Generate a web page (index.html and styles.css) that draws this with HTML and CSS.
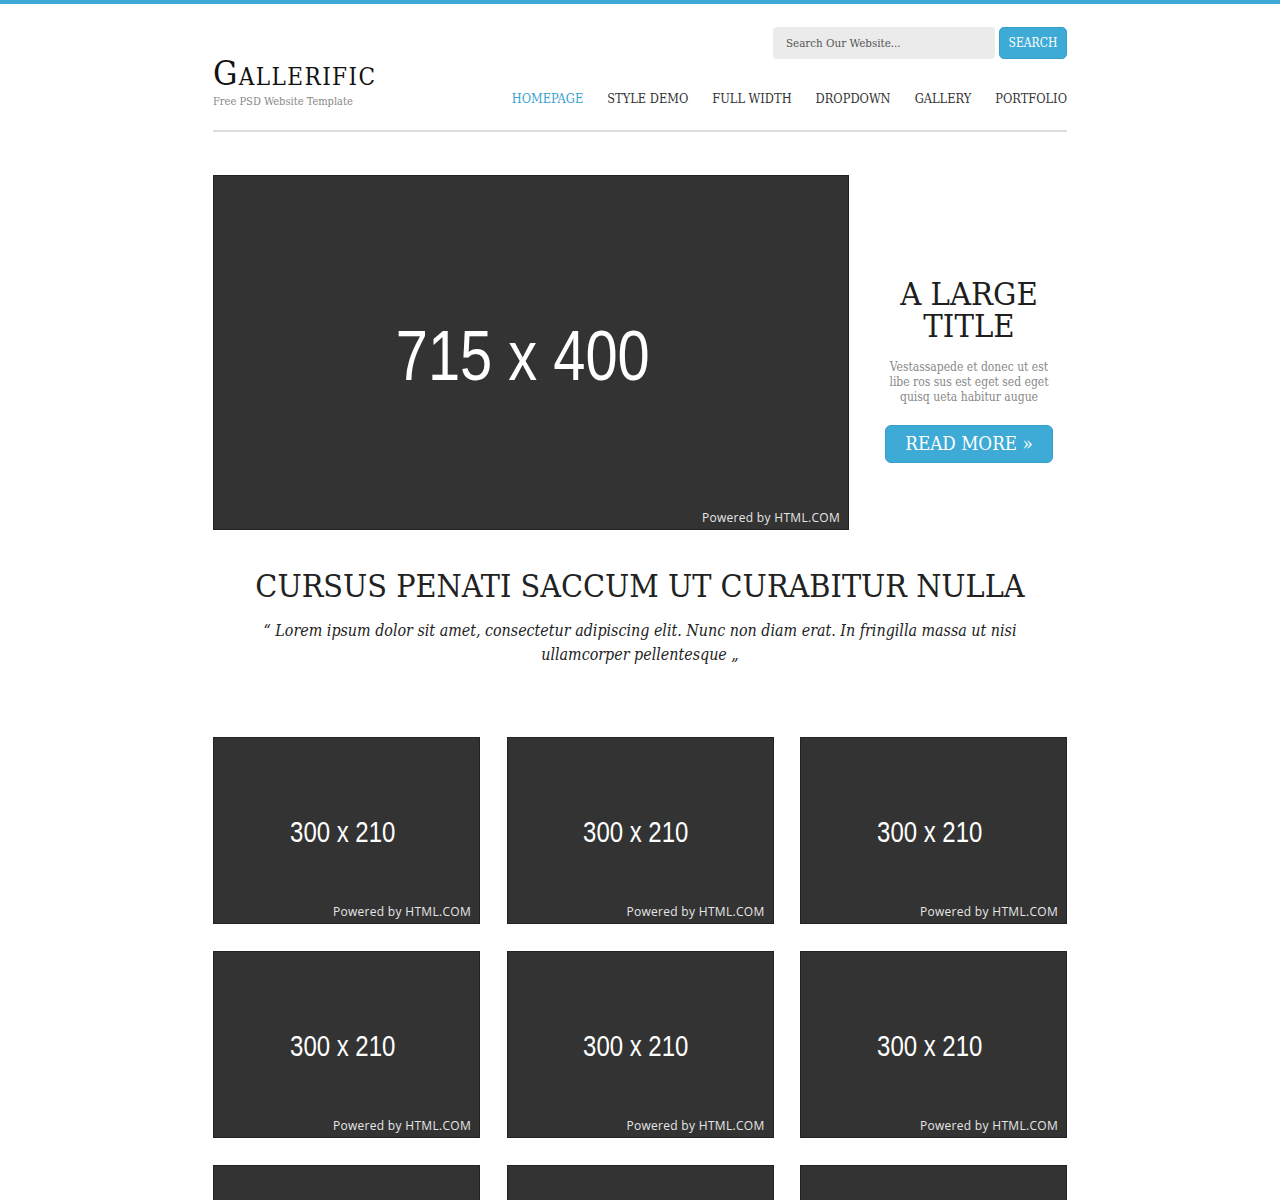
FILE: index.html
```html
<!DOCTYPE html>
<html lang="en">
<head>
<meta charset="utf-8">
<title>Gallerific</title>
<link rel="stylesheet" href="styles.css">
</head>
<body>
<div class="topbar"></div>
<div class="wrap">
  <header class="header">
    <div class="brand">
      <div class="logo">Gallerific</div>
      <div class="tagline">Free PSD Website Template</div>
    </div>
    <div class="header-right">
      <form class="search">
        <input class="search-input" type="text" placeholder="Search Our Website...">
        <button class="search-btn" type="button">SEARCH</button>
      </form>
      <nav class="nav">
        <a class="nav-item active" href="#">HOMEPAGE</a>
        <a class="nav-item" href="#">STYLE DEMO</a>
        <a class="nav-item" href="#">FULL WIDTH</a>
        <a class="nav-item" href="#">DROPDOWN</a>
        <a class="nav-item" href="#">GALLERY</a>
        <a class="nav-item" href="#">PORTFOLIO</a>
      </nav>
    </div>
  </header>

  <section class="hero">
    <div class="ph ph-large">
      <span class="ph-size">715 x 400</span>
      <span class="ph-credit">Powered by HTML.COM</span>
    </div>
    <div class="hero-side">
      <h2 class="hero-title">A LARGE<br>TITLE</h2>
      <p class="hero-text">Vestassapede et donec ut est libe ros sus est eget sed eget quisq ueta habitur augue</p>
      <a class="btn-more" href="#">READ MORE &raquo;</a>
    </div>
  </section>

  <section class="intro">
    <h1 class="intro-title">CURSUS PENATI SACCUM UT CURABITUR NULLA</h1>
    <p class="intro-quote">&ldquo; Lorem ipsum dolor sit amet, consectetur adipiscing elit. Nunc non diam erat. In fringilla massa ut nisi ullamcorper pellentesque &bdquo;</p>
  </section>

  <section class="grid">
    <div class="ph ph-thumb"><span class="ph-size">300 x 210</span><span class="ph-credit">Powered by HTML.COM</span></div>
    <div class="ph ph-thumb"><span class="ph-size">300 x 210</span><span class="ph-credit">Powered by HTML.COM</span></div>
    <div class="ph ph-thumb"><span class="ph-size">300 x 210</span><span class="ph-credit">Powered by HTML.COM</span></div>
    <div class="ph ph-thumb"><span class="ph-size">300 x 210</span><span class="ph-credit">Powered by HTML.COM</span></div>
    <div class="ph ph-thumb"><span class="ph-size">300 x 210</span><span class="ph-credit">Powered by HTML.COM</span></div>
    <div class="ph ph-thumb"><span class="ph-size">300 x 210</span><span class="ph-credit">Powered by HTML.COM</span></div>
    <div class="ph ph-thumb"><span class="ph-size">300 x 210</span><span class="ph-credit">Powered by HTML.COM</span></div>
    <div class="ph ph-thumb"><span class="ph-size">300 x 210</span><span class="ph-credit">Powered by HTML.COM</span></div>
    <div class="ph ph-thumb"><span class="ph-size">300 x 210</span><span class="ph-credit">Powered by HTML.COM</span></div>
  </section>
</div>
</body>
</html>
```
FILE: styles.css
```css
* { box-sizing: border-box; }
html, body { margin: 0; padding: 0; background: #fff; }
body {
  font-family: "DejaVu Serif Condensed", "DejaVu Serif", Georgia, serif;
  color: #222;
}
.topbar { height: 4px; background: #3ea9d4; }
.wrap { width: 854px; margin: 0 auto; }

.header {
  display: flex;
  justify-content: space-between;
  align-items: flex-end;
  padding-bottom: 23px;
  border-bottom: 2px solid #dcdcdc;
}
.logo {
  font-variant: small-caps;
  font-size: 34px;
  line-height: 34px;
  color: #111;
  letter-spacing: 1.4px;
}
.tagline {
  font-size: 11px;
  color: #888;
  line-height: 14px;
  margin-top: 5px;
  margin-bottom: -2px;
}
.header-right {
  display: flex;
  flex-direction: column;
  align-items: flex-end;
  padding-top: 23px;
}
.search { display: flex; gap: 4px; margin: 0; }
.search-input {
  width: 222px;
  height: 32px;
  border: 0;
  border-radius: 4px;
  background: #ebebeb;
  padding: 0 13px;
  font-family: inherit;
  font-size: 11.5px;
  color: #555;
  outline: none;
}
.search-input::placeholder { color: #555; }
.search-btn {
  height: 32px;
  width: 68px;
  border: 1px solid #35a0cc;
  border-radius: 5px;
  background: #3eaad6;
  color: #fff;
  font-family: inherit;
  font-size: 12px;
  padding: 0;
}
.nav { display: flex; gap: 24px; margin-top: 32px; }
.nav-item {
  font-size: 12.7px;
  line-height: 16px;
  color: #333;
  text-decoration: none;
}
.nav-item.active { color: #3aa2d2; }

.hero { display: flex; margin-top: 43px; }
.ph {
  background: #333;
  border: 1px solid #222;
  position: relative;
  display: flex;
  align-items: center;
  justify-content: center;
  color: #fff;
}
.ph-large { width: 636px; height: 355px; flex: none; }
.ph-size {
  display: inline-block;
  font-family: "Liberation Sans", Arial, sans-serif;
  transform: scaleX(0.826);
}
.ph-large .ph-size { font-size: 70px; margin-top: 6px; margin-right: 16px; }
.ph-credit {
  position: absolute;
  right: 8px;
  bottom: 3px;
  font-family: "Open Sans", "DejaVu Sans", sans-serif;
  font-size: 12px;
  letter-spacing: 0.3px;
  color: #e6e6e6;
}
.hero-side {
  flex: 1;
  margin-left: 22px;
  text-align: center;
  padding-top: 103px;
}
.hero-title {
  margin: 0;
  font-weight: normal;
  font-size: 32.5px;
  line-height: 32px;
  color: #1e1e1e;
}
.hero-text {
  margin: 18px 0 0;
  font-size: 12px;
  line-height: 15px;
  color: #888;
  padding: 0 18px;
}
.btn-more {
  display: inline-block;
  margin-top: 20px;
  width: 168px;
  height: 38px;
  line-height: 36px;
  border: 1px solid #349fcb;
  border-radius: 6px;
  background: #3eaad6;
  color: #fff;
  font-size: 18.7px;
  text-decoration: none;
}

.intro { text-align: center; margin-top: 36px; }
.intro-title {
  margin: 0;
  font-weight: normal;
  font-size: 32px;
  line-height: 40px;
  color: #222;
}
.intro-quote {
  margin: 13px 30px 0;
  font-style: italic;
  font-size: 15.9px;
  line-height: 24px;
  color: #222;
}

.grid {
  display: grid;
  grid-template-columns: repeat(3, 1fr);
  column-gap: 26.5px;
  row-gap: 27px;
  margin-top: 70px;
  padding-bottom: 40px;
}
.ph-thumb { height: 187px; }
.ph-thumb .ph-size { font-size: 29px; margin-top: 3px; margin-right: 8px; }
.ph-thumb .ph-credit { right: 8px; bottom: 3px; }
```
